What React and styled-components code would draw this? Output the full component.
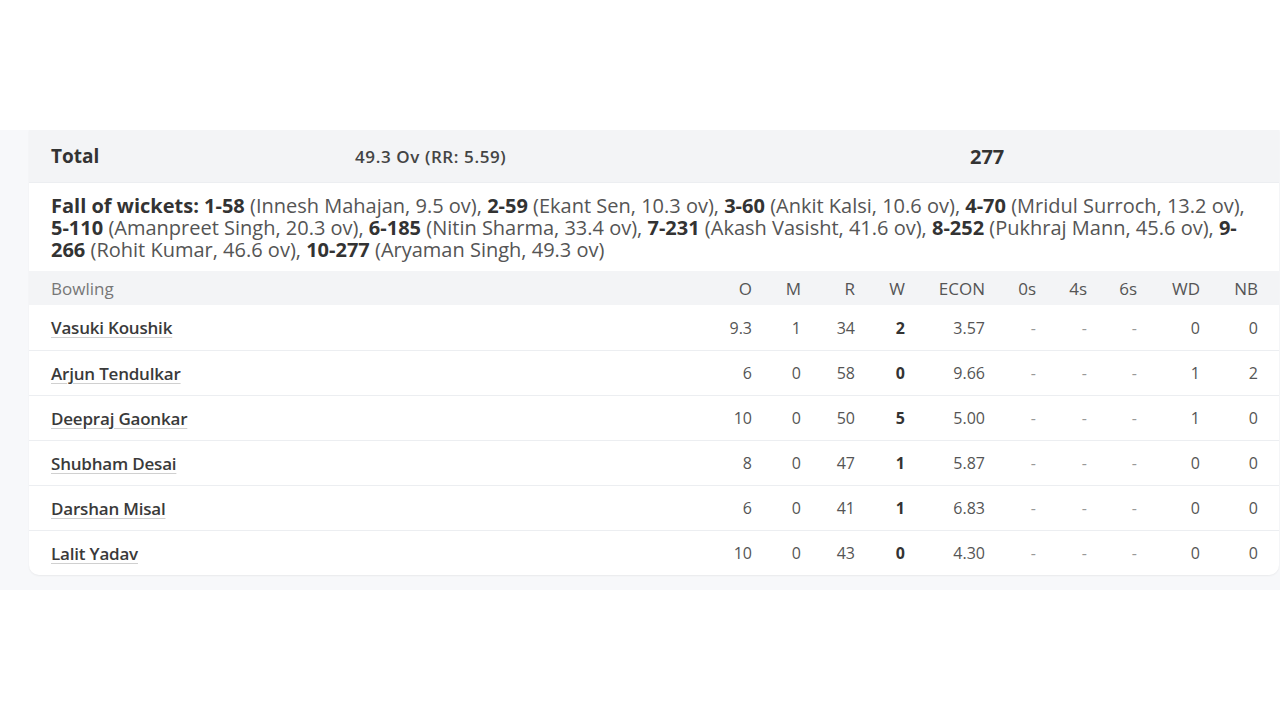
import React from 'react';
import styled, { createGlobalStyle } from 'styled-components';

const GlobalStyle = createGlobalStyle`
    html, body {
        margin: 0;
        padding: 0;
        background: #fff;
        font-family: "Open Sans", "Liberation Sans", sans-serif;
        color: #333;
    }
`;

const Page = styled.div`
    width: 1280px;
    height: 720px;
    padding-top: 130px;
    box-sizing: border-box;
    overflow: hidden;
`;

const Panel = styled.div`
    background: #f7f8fa;
    padding: 0 0 15px 29px;
`;

const Card = styled.div`
    background: #fff;
    width: 1250px;
    border-radius: 0 0 10px 10px;
    box-shadow: 0 1px 2px rgba(0, 0, 0, 0.06);
    overflow: hidden;
`;

const TotalRow = styled.div`
    background: #f3f4f6;
    height: 52px;
    display: grid;
    grid-template-columns: 304px 560px 1fr;
    align-items: center;
    padding-left: 22px;
    border-bottom: 1px solid #eceef1;
`;

const TotalLabel = styled.div`
    font-size: 19px;
    font-weight: 700;
    color: #333;
`;

const TotalOvers = styled.div`
    font-size: 17px;
    font-weight: 600;
    color: #444;
    letter-spacing: 0.6px;
`;

const TotalRuns = styled.div`
    font-size: 20px;
    font-weight: 700;
    color: #333;
    padding-left: 55px;
`;

const Wickets = styled.div`
    padding: 12px 26px 10px 22px;
    font-size: 20px;
    line-height: 22px;
    color: #555;

    b {
        color: #333;
        font-weight: 700;
    }
`;

const COLS = '1fr 49px 49px 54px 50px 80px 51px 51px 50px 63px 58px';

const HeaderRow = styled.div`
    display: grid;
    grid-template-columns: ${COLS};
    height: 34px;
    align-items: center;
    background: #f3f4f6;
    padding: 0 21px 0 22px;
    font-size: 17px;
    color: #777;
`;

const Row = styled.div`
    display: grid;
    grid-template-columns: ${COLS};
    height: 45px;
    align-items: center;
    padding: 0 21px 0 22px;
    font-size: 16px;
    color: #555;
    border-top: ${props => (props.first ? 'none' : '1px solid #eceef1')};
    box-sizing: border-box;
`;

const Cell = styled.div`
    text-align: right;
    font-weight: ${props => (props.bold ? 700 : 400)};
    color: ${props => (props.bold ? '#333' : props.muted ? '#999' : '#555')};
`;

const Name = styled.span`
    justify-self: start;
    font-size: 17px;
    font-weight: 600;
    color: #3a3a3a;
    letter-spacing: -0.2px;
    text-decoration: underline;
    text-decoration-color: #d0d0d0;
    text-underline-offset: 3px;
    text-decoration-thickness: 1px;
`;

const fow = [
    ['1-58', 'Innesh Mahajan, 9.5 ov'],
    ['2-59', 'Ekant Sen, 10.3 ov'],
    ['3-60', 'Ankit Kalsi, 10.6 ov'],
    ['4-70', 'Mridul Surroch, 13.2 ov'],
    ['5-110', 'Amanpreet Singh, 20.3 ov'],
    ['6-185', 'Nitin Sharma, 33.4 ov'],
    ['7-231', 'Akash Vasisht, 41.6 ov'],
    ['8-252', 'Pukhraj Mann, 45.6 ov'],
    ['9-266', 'Rohit Kumar, 46.6 ov'],
    ['10-277', 'Aryaman Singh, 49.3 ov'],
];

const headers = ['O', 'M', 'R', 'W', 'ECON', '0s', '4s', '6s', 'WD', 'NB'];

const bowlers = [
    ['Vasuki Koushik', '9.3', '1', '34', '2', '3.57', '0', '0'],
    ['Arjun Tendulkar', '6', '0', '58', '0', '9.66', '1', '2'],
    ['Deepraj Gaonkar', '10', '0', '50', '5', '5.00', '1', '0'],
    ['Shubham Desai', '8', '0', '47', '1', '5.87', '0', '0'],
    ['Darshan Misal', '6', '0', '41', '1', '6.83', '0', '0'],
    ['Lalit Yadav', '10', '0', '43', '0', '4.30', '0', '0'],
];

export default function App() {
    return (
        <Page>
            <GlobalStyle />
            <Panel>
                <Card>
                    <TotalRow>
                        <TotalLabel>Total</TotalLabel>
                        <TotalOvers>49.3 Ov (RR: 5.59)</TotalOvers>
                        <TotalRuns>277</TotalRuns>
                    </TotalRow>
                    <Wickets>
                        <b>Fall of wickets: </b>
                        {fow.map(([score, who], i) => (
                            <React.Fragment key={score}>
                                <b>{score}</b> ({who}){i < fow.length - 1 ? ', ' : ''}
                            </React.Fragment>
                        ))}
                    </Wickets>
                    <HeaderRow>
                        <div>Bowling</div>
                        {headers.map(h => <Cell key={h}>{h}</Cell>)}
                    </HeaderRow>
                    {bowlers.map(([name, o, m, r, w, econ, wd, nb], i) => (
                        <Row key={name} first={i === 0}>
                            <Name>{name}</Name>
                            <Cell>{o}</Cell>
                            <Cell>{m}</Cell>
                            <Cell>{r}</Cell>
                            <Cell bold>{w}</Cell>
                            <Cell>{econ}</Cell>
                            <Cell muted>-</Cell>
                            <Cell muted>-</Cell>
                            <Cell muted>-</Cell>
                            <Cell>{wd}</Cell>
                            <Cell>{nb}</Cell>
                        </Row>
                    ))}
                </Card>
            </Panel>
        </Page>
    );
}
